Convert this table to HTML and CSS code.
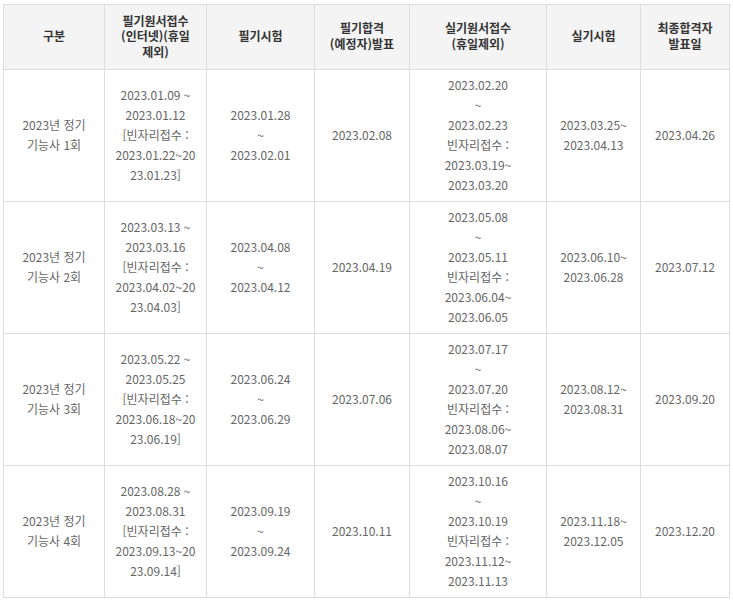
FILE: index.html
```html
<!DOCTYPE html>
<html lang="ko">
<head>
<meta charset="utf-8">
<link rel="stylesheet" href="styles.css">
</head>
<body>
<table class="sched">
  <colgroup>
    <col class="c1"><col class="c2"><col class="c3"><col class="c4"><col class="c5"><col class="c6"><col class="c7">
  </colgroup>
  <thead>
    <tr>
      <th>구분</th>
      <th>필기원서접수<br>(인터넷)(휴일<br>제외)</th>
      <th>필기시험</th>
      <th>필기합격<br>(예정자)발표</th>
      <th>실기원서접수<br>(휴일제외)</th>
      <th>실기시험</th>
      <th>최종합격자<br>발표일</th>
    </tr>
  </thead>
  <tbody>
    <tr>
      <td>2023년 정기<br>기능사 1회</td>
      <td>2023.01.09 ~<br>2023.01.12<br>[빈자리접수 :<br>2023.01.22~20<br>23.01.23]</td>
      <td>2023.01.28<br>~<br>2023.02.01</td>
      <td>2023.02.08</td>
      <td>2023.02.20<br>~<br>2023.02.23<br>빈자리접수 :<br>2023.03.19~<br>2023.03.20</td>
      <td>2023.03.25~<br>2023.04.13</td>
      <td>2023.04.26</td>
    </tr>
    <tr>
      <td>2023년 정기<br>기능사 2회</td>
      <td>2023.03.13 ~<br>2023.03.16<br>[빈자리접수 :<br>2023.04.02~20<br>23.04.03]</td>
      <td>2023.04.08<br>~<br>2023.04.12</td>
      <td>2023.04.19</td>
      <td>2023.05.08<br>~<br>2023.05.11<br>빈자리접수 :<br>2023.06.04~<br>2023.06.05</td>
      <td>2023.06.10~<br>2023.06.28</td>
      <td>2023.07.12</td>
    </tr>
    <tr>
      <td>2023년 정기<br>기능사 3회</td>
      <td>2023.05.22 ~<br>2023.05.25<br>[빈자리접수 :<br>2023.06.18~20<br>23.06.19]</td>
      <td>2023.06.24<br>~<br>2023.06.29</td>
      <td>2023.07.06</td>
      <td>2023.07.17<br>~<br>2023.07.20<br>빈자리접수 :<br>2023.08.06~<br>2023.08.07</td>
      <td>2023.08.12~<br>2023.08.31</td>
      <td>2023.09.20</td>
    </tr>
    <tr>
      <td>2023년 정기<br>기능사 4회</td>
      <td>2023.08.28 ~<br>2023.08.31<br>[빈자리접수 :<br>2023.09.13~20<br>23.09.14]</td>
      <td>2023.09.19<br>~<br>2023.09.24</td>
      <td>2023.10.11</td>
      <td>2023.10.16<br>~<br>2023.10.19<br>빈자리접수 :<br>2023.11.12~<br>2023.11.13</td>
      <td>2023.11.18~<br>2023.12.05</td>
      <td>2023.12.20</td>
    </tr>
  </tbody>
</table>
</body>
</html>
```
FILE: styles.css
```css
html, body {
  margin: 0;
  background: #fff;
}
body {
  padding: 4px 3px;
  font-family: "Noto Sans CJK KR", "Noto Sans", sans-serif;
}
.sched {
  border-collapse: collapse;
  table-layout: fixed;
  width: 726px;
}
.c1 { width: 101px; }
.c2 { width: 102px; }
.c3 { width: 108px; }
.c4 { width: 95px; }
.c5 { width: 137px; }
.c6 { width: 94px; }
.c7 { width: 89px; }
.sched th,
.sched td {
  border: 1px solid #dddddd;
  text-align: center;
  vertical-align: middle;
}
.sched th {
  background: #f4f4f4;
  color: #333333;
  font-size: 12px;
  font-weight: bold;
  line-height: 15.6px;
  height: 62px;
  padding: 0 4px 2px;
}
.sched td {
  color: #666666;
  font-size: 12px;
  line-height: 20px;
  height: 129px;
  padding: 0 4px 2px;
}
```
